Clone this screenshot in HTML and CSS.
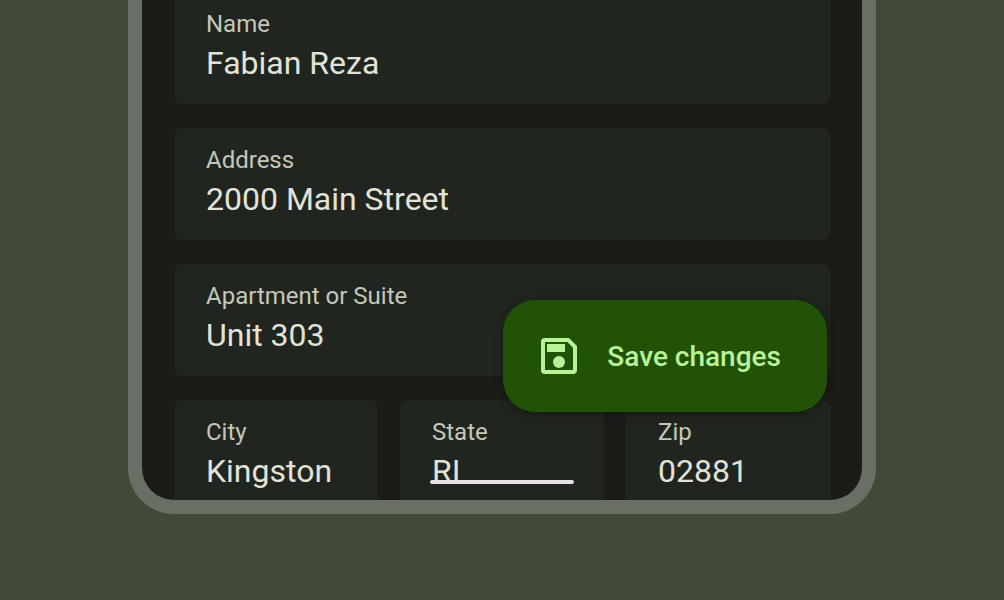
FILE: index.html
```html
<!DOCTYPE html>
<html lang="en">
<head>
<meta charset="utf-8">
<meta name="viewport" content="width=device-width, initial-scale=1">
<title>Edit address</title>
<link rel="stylesheet" href="styles.css">
</head>
<body>
<main class="phone">
  <form class="form">
    <div class="field field-first">
      <label class="label" for="name">Name</label>
      <input class="value" id="name" type="text" value="Fabian Reza">
    </div>
    <div class="field">
      <label class="label" for="address">Address</label>
      <input class="value" id="address" type="text" value="2000 Main Street">
    </div>
    <div class="field">
      <label class="label" for="unit">Apartment or Suite</label>
      <input class="value" id="unit" type="text" value="Unit 303">
    </div>
    <div class="row">
      <div class="field field-last">
        <label class="label" for="city">City</label>
        <input class="value" id="city" type="text" value="Kingston">
      </div>
      <div class="field field-last field-active">
        <label class="label" for="state">State</label>
        <input class="value" id="state" type="text" value="RI">
      </div>
      <div class="field field-last">
        <label class="label" for="zip">Zip</label>
        <input class="value" id="zip" type="text" value="02881">
      </div>
    </div>
    <button class="save" type="button">
      <svg class="save-icon" viewBox="0 0 24 24" aria-hidden="true">
        <path fill="currentColor" fill-rule="evenodd" d="M5 3h12l4 4v12a2 2 0 0 1-2 2H5a2 2 0 0 1-2-2V5a2 2 0 0 1 2-2zm0 2v14h14V7.830L16.170 5z"/>
        <path fill="currentColor" d="M6 6h9v4H6z"/>
        <circle fill="currentColor" cx="12" cy="15" r="3"/>
      </svg>
      <span>Save changes</span>
    </button>
  </form>
</main>
</body>
</html>
```
FILE: styles.css
```css
* {
  box-sizing: border-box;
}

body {
  margin: 0;
  padding: 0 128px;
  background: #404a36;
  font-family: Roboto, "Liberation Sans", sans-serif;
}

.phone {
  position: relative;
  overflow: hidden;
  border: 14px solid #687066;
  border-top: 0;
  border-radius: 0 0 46px 46px;
  background: #1b1c18;
}

.form {
  display: flex;
  flex-direction: column;
  gap: 24px;
  padding: 0 32px;
}

.row {
  display: grid;
  grid-template-columns: repeat(3, minmax(0, 1fr));
  gap: 22px;
}

.field {
  position: relative;
  display: flex;
  flex-direction: column;
  padding: 16px 32px 18px;
  border-radius: 8px;
  background: #21251f;
}

.field-first {
  padding-top: 8px;
  border-radius: 0 0 8px 8px;
}

.field-last {
  padding-bottom: 6px;
  border-radius: 8px 8px 0 0;
}

.field-active::after {
  content: "";
  position: absolute;
  right: 30px;
  bottom: 16px;
  left: 30px;
  height: 4px;
  border-radius: 2px;
  background: #e6e1e5;
}

.label {
  color: #c4c8ba;
  font-size: 24px;
  line-height: 32px;
}

.value {
  width: 100%;
  height: 46px;
  padding: 0;
  border: 0;
  outline: 0;
  background: transparent;
  color: #e2e3d8;
  font: inherit;
  font-size: 32px;
}

.save {
  position: absolute;
  right: 35px;
  bottom: 88px;
  display: flex;
  align-items: center;
  gap: 24px;
  padding: 32px 46px 32px 32px;
  border: 0;
  border-radius: 32px;
  background: #225108;
  box-shadow: 0 2px 8px rgb(0 0 0 / 40%);
  color: #b7f397;
  font: inherit;
  font-size: 28px;
  font-weight: 500;
}

.save-icon {
  width: 48px;
  height: 48px;
}
```
